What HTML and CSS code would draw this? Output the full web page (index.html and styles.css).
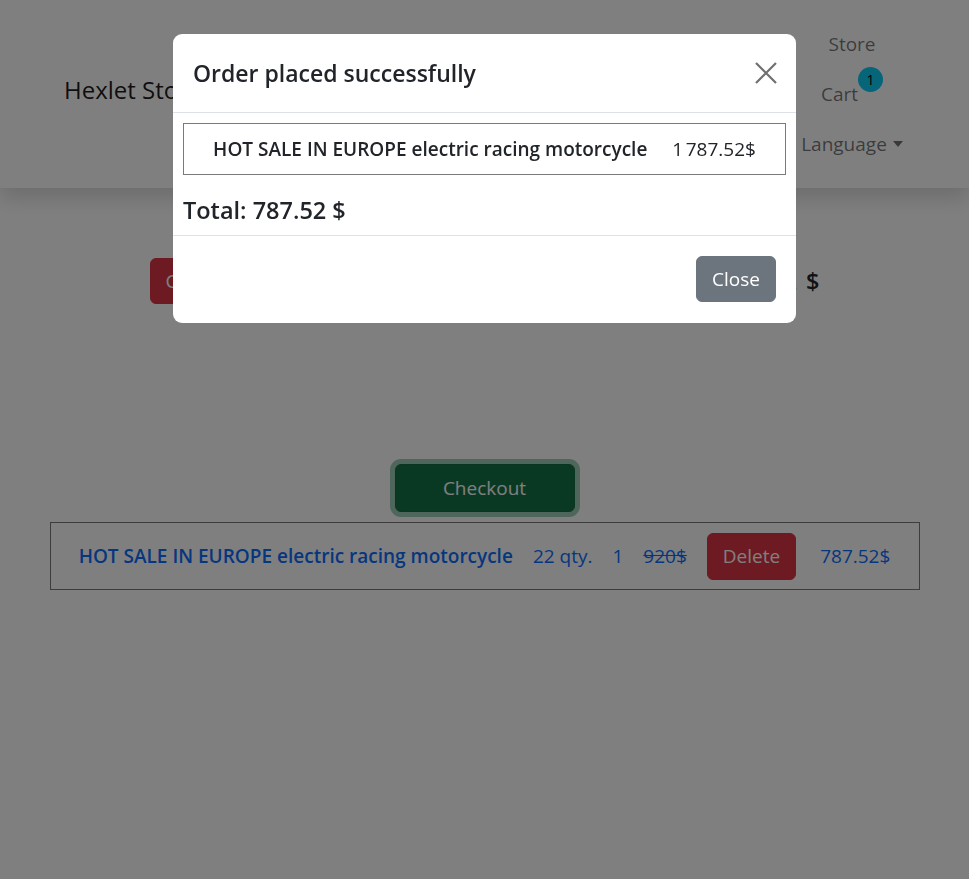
FILE: index.html
```html
<!DOCTYPE html>
<html lang="en">
<head>
<meta charset="utf-8">
<title>Hexlet Store</title>
<link rel="stylesheet" href="styles.css">
</head>
<body>
<nav class="navbar">
  <a class="brand" href="#">Hexlet Store</a>
  <ul class="nav">
    <li><a class="nav-link" href="#">Store</a></li>
    <li><a class="nav-link cart-link" href="#">Cart<span class="badge">1</span></a></li>
    <li><a class="nav-link dropdown-toggle" href="#">Language</a></li>
  </ul>
</nav>

<main class="container">
  <div class="summary">
    <button class="btn btn-danger">Clear cart</button>
    <h4 class="summary-total">Total: 787.52 $</h4>
  </div>
  <div class="checkout-row">
    <button class="btn btn-success btn-checkout">Checkout</button>
  </div>
  <div class="cart-item">
    <a class="item-name" href="#">HOT SALE IN EUROPE electric racing motorcycle</a>
    <span class="item-cell">22 qty.</span>
    <span class="item-cell">1</span>
    <span class="item-cell old-price">920$</span>
    <button class="btn btn-danger">Delete</button>
    <span class="item-cell item-price">787.52$</span>
  </div>
</main>

<div class="backdrop"></div>

<div class="modal">
  <div class="modal-content">
    <div class="modal-header">
      <h5 class="modal-title">Order placed successfully</h5>
      <button class="btn-close" aria-label="Close">
        <svg viewBox="0 0 22 22" width="22" height="22"><path d="M1 1L21 21M21 1L1 21" stroke="currentColor" stroke-width="2.2" fill="none"/></svg>
      </button>
    </div>
    <div class="modal-body">
      <div class="order-item">
        <span class="order-name">HOT SALE IN EUROPE electric racing motorcycle</span>
        <span class="order-price">1&#8239;787.52$</span>
      </div>
      <h5 class="order-total">Total: 787.52 $</h5>
    </div>
    <div class="modal-footer">
      <button class="btn btn-secondary">Close</button>
    </div>
  </div>
</div>
</body>
</html>
```

FILE: styles.css
```css
* { box-sizing: border-box; }

body {
  margin: 0;
  font-family: "Open Sans", "Noto Sans", sans-serif;
  font-size: 19px;
  line-height: 30px;
  color: #212529;
  background: #fff;
  min-height: 879px;
}

a { text-decoration: none; }

.navbar {
  display: flex;
  justify-content: space-between;
  align-items: center;
  height: 188px;
  padding: 19px 47px 19px 64px;
  background: #fff;
  box-shadow: 0 10px 20px rgba(0, 0, 0, 0.15);
}

.brand {
  font-size: 24px;
  line-height: 30px;
  color: rgba(0, 0, 0, 0.9);
  margin-top: -8px;
}

.nav {
  list-style: none;
  margin: 0;
  padding: 0;
  width: 140px;
  display: flex;
  flex-direction: column;
  align-items: center;
}

.nav-link {
  display: flex;
  align-items: flex-start;
  padding: 10px 0;
  line-height: 30px;
  color: rgba(0, 0, 0, 0.55);
}

.badge {
  display: inline-block;
  width: 25px;
  height: 25px;
  margin-top: -12px;
  border-radius: 50%;
  background: #0dcaf0;
  color: #000;
  font-size: 14px;
  line-height: 25px;
  text-align: center;
}

.dropdown-toggle::after {
  content: "";
  align-self: center;
  margin-left: 6px;
  border-top: 6px solid;
  border-left: 5px solid transparent;
  border-right: 5px solid transparent;
}

.container {
  width: 870px;
  margin: 0 auto;
}

.summary {
  display: flex;
  justify-content: space-between;
  align-items: center;
  padding: 0 100px;
  margin-top: 70px;
}

.summary-total {
  margin: 0;
  font-size: 23.5px;
  font-weight: 600;
  line-height: 30px;
  word-spacing: 3px;
}

.btn {
  font-family: inherit;
  font-size: 19px;
  line-height: 30px;
  padding: 7px 15px;
  border: 1px solid transparent;
  border-radius: 6px;
  color: #fff;
  cursor: pointer;
}

.btn-danger { background: #dc3545; border-color: #dc3545; }
.btn-secondary { background: #6c757d; border-color: #6c757d; }
.btn-success { background: #157347; border-color: #146c43; }

.checkout-row {
  display: flex;
  justify-content: center;
  margin-top: 160px;
}

.btn-checkout {
  width: 180px;
  height: 48px;
  box-shadow: 0 0 0 5px rgba(60, 153, 110, 0.5);
}

.cart-item {
  display: flex;
  justify-content: center;
  align-items: center;
  gap: 20px;
  height: 68px;
  margin-top: 10px;
  border: 1px solid #7a7a7a;
  color: #0d6efd;
}

.cart-item .btn { height: 47px; }

.item-name {
  color: #0d6efd;
  font-weight: 600;
}

.old-price { text-decoration: line-through; }
.item-price { margin-left: 4px; }

.backdrop {
  position: fixed;
  inset: 0;
  background: rgba(0, 0, 0, 0.5);
}

.modal {
  position: fixed;
  top: 34px;
  left: 173px;
  width: 623px;
}

.modal-content {
  background: #fff;
  border-radius: 9px;
  overflow: hidden;
}

.modal-header {
  display: flex;
  align-items: center;
  justify-content: space-between;
  height: 79px;
  padding: 0 19px 0 20px;
  border-bottom: 1px solid #dee2e6;
}

.modal-title {
  margin: 0;
  font-size: 23px;
  font-weight: 600;
  line-height: 30px;
}

.btn-close {
  background: none;
  border: 0;
  padding: 0;
  width: 22px;
  height: 22px;
  color: #6f6f6f;
  cursor: pointer;
}

.btn-close svg { display: block; }

.modal-body {
  padding: 10px;
  border-bottom: 1px solid #dee2e6;
}

.order-item {
  display: flex;
  justify-content: center;
  align-items: center;
  gap: 25px;
  height: 52px;
  border: 1px solid #7a7a7a;
}

.order-name { font-weight: 600; }

.order-total {
  margin: 20px 0 0;
  font-size: 23.5px;
  font-weight: 600;
  line-height: 30px;
}

.modal-footer {
  display: flex;
  justify-content: flex-end;
  padding: 20px 20px 21px;
}

.modal-footer .btn { height: 46px; width: 80px; padding: 7px 0; }
```
